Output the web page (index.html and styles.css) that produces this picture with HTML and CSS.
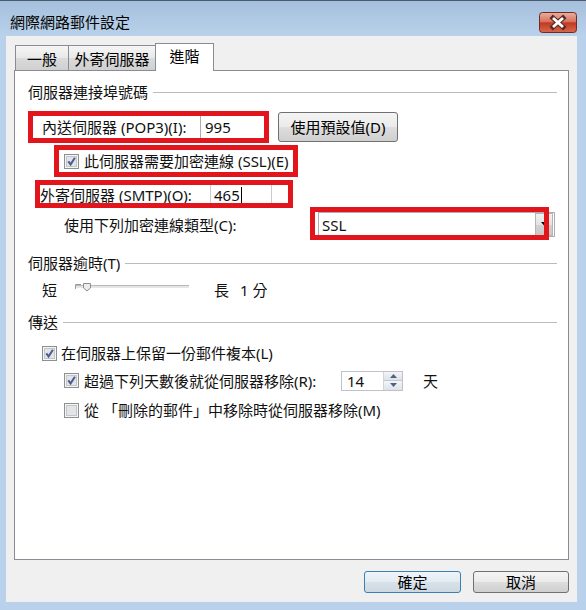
FILE: index.html
```
<!DOCTYPE html>
<html lang="zh-Hant">
<head>
<meta charset="utf-8">
<title>網際網路郵件設定</title>
<link rel="stylesheet" href="styles.css">
</head>
<body>
<div class="window">
  <div class="titlebar">
    <span class="title">網際網路郵件設定</span>
    <span class="close-btn">
      <svg width="38" height="21" viewBox="0 0 38 21">
        <defs>
          <linearGradient id="cg" x1="0" y1="0" x2="0" y2="1">
            <stop offset="0" stop-color="#eab0a2"/>
            <stop offset="0.45" stop-color="#d7735f"/>
            <stop offset="0.52" stop-color="#c13a22"/>
            <stop offset="1" stop-color="#d8694c"/>
          </linearGradient>
        </defs>
        <rect x="0.5" y="0.5" width="37" height="20" rx="3" fill="url(#cg)" stroke="#6d2b22"/>
        <path d="M14 6 L24 15 M24 6 L14 15" stroke="#5b2a24" stroke-width="5" stroke-linecap="square"/>
        <path d="M14 6 L24 15 M24 6 L14 15" stroke="#ffffff" stroke-width="2.8"/>
      </svg>
    </span>
  </div>
  <div class="client">
    <div class="tabs">
      <div class="tab tab-general">一般</div>
      <div class="tab tab-out">外寄伺服器</div>
      <div class="tab tab-adv active">進階</div>
    </div>
    <div class="panel">
      <div class="group-head">伺服器連接埠號碼</div>

      <div class="row row-pop">
        <span class="lbl lbl-pop">內送伺服器 (POP3)(I):</span>
        <span class="textbox tb-pop">995</span>
        <span class="btn btn-defaults">使用預設值(D)</span>
      </div>

      <div class="row row-ssl">
        <svg class="cb" width="15" height="15" viewBox="0 0 15 15"><rect x="0.5" y="0.5" width="14" height="14" fill="#f5f5f5" stroke="#8e8f8f"/><rect x="2.5" y="2.5" width="10" height="10" fill="#e2e4e8" stroke="#c2c5ca"/><path d="M4.3 7.4 L6.6 10.4 L10.9 3.8" stroke="#4b5d92" stroke-width="2" fill="none"/></svg>
        <span class="lbl">此伺服器需要加密連線 (SSL)(E)</span>
      </div>

      <div class="row row-smtp">
        <span class="lbl lbl-smtp">外寄伺服器 (SMTP)(O):</span>
        <span class="textbox tb-smtp">465<span class="caret"></span></span>
      </div>

      <div class="row row-enc">
        <span class="lbl lbl-enc">使用下列加密連線類型(C):</span>
        <span class="combo">
          <span class="combo-text">SSL</span>
          <span class="combo-arrow">
            <svg width="7" height="4" viewBox="0 0 7 4"><path d="M0 0 H7 L3.5 4 Z" fill="#000"/></svg>
          </span>
        </span>
      </div>

      <div class="group-head gh-timeout">伺服器逾時(T)</div>

      <div class="row row-slider">
        <span class="lbl">短</span>
        <svg class="slider" width="114" height="20" viewBox="0 0 114 20">
          <rect x="0" y="5" width="114" height="1" fill="#b9b9b9"/>
          <rect x="0" y="6" width="114" height="2" fill="#e6e6e6"/>
          <path d="M0.5 9 V4.5 H6" stroke="#9a9a9a" fill="none"/>
          <path d="M8.5 3.5 H15.5 V8 L12 11 L8.5 8 Z" fill="#ececec" stroke="#8d8d8d"/>
        </svg>
        <span class="lbl lbl-long">長</span>
        <span class="lbl lbl-min">1 分</span>
      </div>

      <div class="group-head gh-send">傳送</div>

      <div class="row row-keep">
        <svg class="cb" width="15" height="15" viewBox="0 0 15 15"><rect x="0.5" y="0.5" width="14" height="14" fill="#f5f5f5" stroke="#8e8f8f"/><rect x="2.5" y="2.5" width="10" height="10" fill="#e2e4e8" stroke="#c2c5ca"/><path d="M4.3 7.4 L6.6 10.4 L10.9 3.8" stroke="#4b5d92" stroke-width="2" fill="none"/></svg>
        <span class="lbl">在伺服器上保留一份郵件複本(L)</span>
      </div>

      <div class="row row-days">
        <svg class="cb" width="15" height="15" viewBox="0 0 15 15"><rect x="0.5" y="0.5" width="14" height="14" fill="#f5f5f5" stroke="#8e8f8f"/><rect x="2.5" y="2.5" width="10" height="10" fill="#e2e4e8" stroke="#c2c5ca"/><path d="M4.3 7.4 L6.6 10.4 L10.9 3.8" stroke="#4b5d92" stroke-width="2" fill="none"/></svg>
        <span class="lbl lbl-days">超過下列天數後就從伺服器移除(R):</span>
        <span class="spinner">
          <span class="spin-text">14</span>
          <span class="spin-btns">
            <span class="spin-up"><svg width="7" height="4" viewBox="0 0 7 4"><path d="M0 4 H7 L3.5 0 Z" fill="#4d6185"/></svg></span>
            <span class="spin-down"><svg width="7" height="4" viewBox="0 0 7 4"><path d="M0 0 H7 L3.5 4 Z" fill="#4d6185"/></svg></span>
          </span>
        </span>
        <span class="lbl lbl-day">天</span>
      </div>

      <div class="row row-deleted">
        <svg class="cb" width="15" height="15" viewBox="0 0 15 15"><rect x="0.5" y="0.5" width="14" height="14" fill="#f5f5f5" stroke="#8e8f8f"/><rect x="2.5" y="2.5" width="10" height="10" fill="#e2e4e8" stroke="#c2c5ca"/></svg>
        <span class="lbl">從 「刪除的郵件」中移除時從伺服器移除(M)</span>
      </div>

      <span class="mark mark-pop"></span>
      <span class="mark mark-ssl"></span>
      <span class="mark mark-smtp"></span>
      <span class="mark mark-enc"></span>
    </div>
    <div class="footer">
      <span class="btn btn-ok">確定</span>
      <span class="btn btn-cancel">取消</span>
    </div>
  </div>
</div>
</body>
</html>
```
FILE: styles.css
```
* { box-sizing: border-box; }
html, body { margin: 0; padding: 0; }
body {
  width: 586px;
  height: 610px;
  overflow: hidden;
  font-family: "Noto Sans", "Noto Sans CJK TC", sans-serif;
  font-size: 15px;
  line-height: 18px;
  color: #111;
  background: #b9d1ea;
}
.window {
  width: 586px;
  height: 610px;
  background: #b9d1ea;
  border-top: 1px solid #4c5a6a;
  display: flex;
  flex-direction: column;
}
.titlebar {
  height: 35px;
  flex: none;
  display: flex;
  justify-content: space-between;
  align-items: flex-start;
  padding: 0 9px 0 10px;
  background: linear-gradient(#a5c0dd, #b9d1ea);
}
.title { margin-top: 12px; line-height: 18px; color: #000; }
.close-btn { margin-top: 11px; display: block; height: 21px; }
.close-btn svg { display: block; }

.client {
  flex: none;
  height: 566px;
  margin: 0 9px 0 6px;
  background: #f0f0f0;
  padding: 7px 8px 0 8px;
  display: flex;
  flex-direction: column;
}
.tabs {
  height: 27px;
  flex: none;
  display: flex;
  align-items: flex-end;
  padding-left: 1px;
}
.tab {
  height: 25px;
  border: 1px solid #898c95;
  border-bottom: none;
  background: linear-gradient(#f6f6f6, #e8e8e8 50%, #dadada 52%, #d0d0d0);
  padding-top: 4px;
  text-align: center;
  color: #000;
}
.tab + .tab { margin-left: -1px; }
.tab-general { width: 54px; }
.tab-out { width: 88px; }
.tab.active {
  width: 59px;
  height: 28px;
  margin-bottom: -1px;
  background: #fff;
  padding-top: 3px;
  position: relative;
  z-index: 2;
}
.panel {
  flex: none;
  height: 490px;
  background: #fff;
  border: 1px solid #898c95;
  position: relative;
  padding: 12px 11px 0 13px;
  display: flex;
  flex-direction: column;
}
.group-head {
  display: flex;
  align-items: center;
  gap: 5px;
  height: 18px;
  white-space: nowrap;
}
.group-head::after {
  content: "";
  flex: 1;
  height: 1px;
  background: #bcbcbc;
  margin-top: 1px;
}
.gh-timeout { margin-top: 17px; }
.gh-send { margin-top: 13px; }

.row { display: flex; align-items: center; white-space: nowrap; flex: none; }
.lbl { display: block; }
.cb { display: block; flex: none; }

.row-pop { height: 30px; margin-top: 11px; padding-left: 14px; }
.lbl-pop { width: 158px; }
.textbox {
  display: flex;
  align-items: center;
  background: #fff;
  border: 1px solid #abadb3;
}
.tb-pop { width: 66px; height: 28px; padding-left: 4px; }
.btn {
  display: flex;
  align-items: center;
  justify-content: center;
  border: 1px solid #707070;
  border-radius: 3px;
  background: linear-gradient(#f4f4f4, #ebebeb 48%, #dddddd 52%, #cfcfcf);
  color: #000;
}
.btn-defaults { width: 120px; height: 30px; margin-left: 12px; }

.row-ssl { height: 20px; margin-top: 9px; padding-left: 36px; gap: 5px; }

.row-smtp { height: 24px; margin-top: 12px; padding-left: 12px; }
.lbl-smtp { width: 170px; }
.tb-smtp { width: 62px; height: 24px; padding-left: 3px; border-color: #c9cbd0; }
.caret { display: block; width: 1px; height: 16px; background: #000; margin-left: 1px; }

.row-enc { height: 25px; margin-top: 5px; padding-left: 36px; }
.lbl-enc { width: 254px; }
.combo {
  width: 237px;
  height: 25px;
  border: 1px solid #abadb3;
  background: #fff;
  display: flex;
  align-items: center;
  justify-content: space-between;
  padding: 0 1px 0 3px;
}
.combo-arrow {
  width: 18px;
  height: 23px;
  border: 1px solid #b5b5b5;
  background: linear-gradient(#f2f2f2, #e2e2e2 50%, #d2d2d2 52%, #c8c8c8);
  display: flex;
  justify-content: center;
  padding-top: 8px;
}
.combo-arrow svg { display: block; }

.row-slider { height: 20px; margin-top: 8px; padding-left: 14px; }
.slider { display: block; margin-left: 18px; flex: none; }
.lbl-long { margin-left: 25px; }
.lbl-min { margin-left: 11px; }

.row-keep { height: 20px; margin-top: 12px; padding-left: 14px; gap: 4px; }
.row-days { height: 21px; margin-top: 7px; padding-left: 36px; gap: 5px; }
.lbl-days { width: 252px; }
.spinner {
  display: flex;
  width: 62px;
  height: 20px;
  border: 1px solid #c0c2c7;
  background: #fff;
}
.spin-text { flex: 1; padding-left: 5px; line-height: 18px; }
.spin-btns {
  width: 19px;
  display: flex;
  flex-direction: column;
  border-left: 1px solid #d0d3d8;
}
.spin-up, .spin-down {
  flex: 1;
  display: flex;
  align-items: center;
  justify-content: center;
  background: linear-gradient(#f3f5f8, #dde2ea);
}
.spin-up { border-bottom: 1px solid #c3c9d3; }
.spin-up svg, .spin-down svg { display: block; }
.lbl-day { margin-left: 15px; }

.row-deleted { height: 20px; margin-top: 9px; padding-left: 36px; gap: 5px; }

.mark {
  position: absolute;
  border: 5px solid #e2141c;
  z-index: 3;
  pointer-events: none;
}
.mark-pop { left: 13px; top: 40px; width: 241px; height: 32px; }
.mark-ssl { left: 39px; top: 74px; width: 244px; height: 32px; }
.mark-smtp { left: 20px; top: 109px; width: 258px; height: 28px; }
.mark-enc { left: 295px; top: 136px; width: 239px; height: 33px; }

.footer {
  display: flex;
  justify-content: flex-end;
  gap: 12px;
  margin-top: 11px;
}
.btn-ok {
  width: 97px;
  height: 22px;
  border-color: #3c7fb1;
  background: linear-gradient(#eef4f8, #e3ecf2 48%, #d6e1ea 52%, #cdd8e1);
}
.btn-cancel { width: 96px; height: 22px; }
```
